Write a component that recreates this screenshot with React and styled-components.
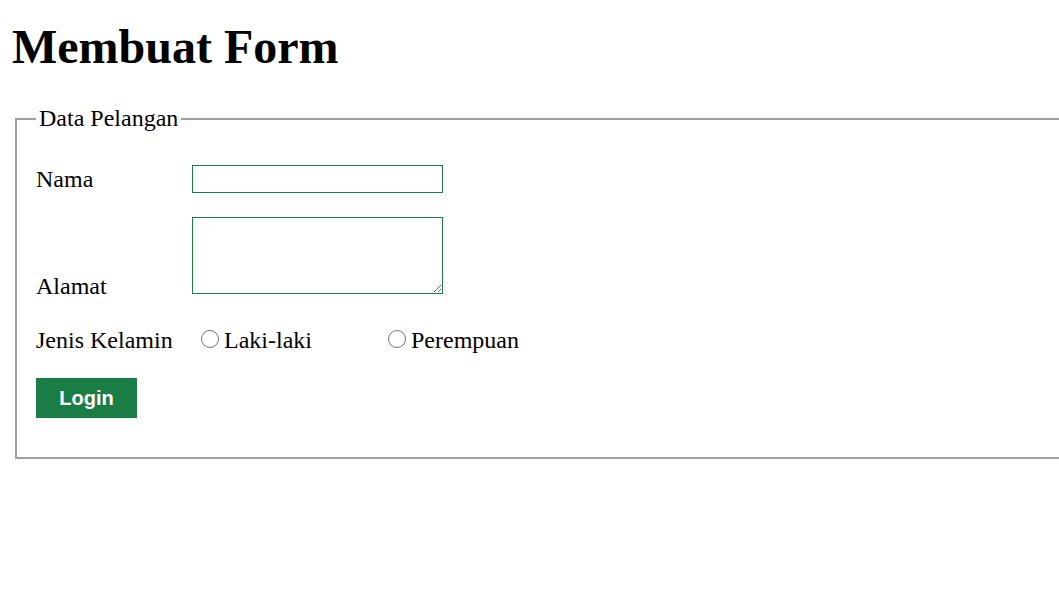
import React from 'react'
import styled, { createGlobalStyle } from 'styled-components'

const GlobalStyle = createGlobalStyle`
html, body {
  margin: 0;
  overflow: hidden;
  background: #fff;
}
body {
  font-family: "Liberation Serif", "Times New Roman", serif;
  font-size: 24px;
  color: #000;
}
`

const Page = styled.div`
padding-left: 12px;
width: 1200px;
`

const Title = styled.h1`
font-size: 48px;
font-weight: bold;
margin: 19px 0 31px 0;
`

const Box = styled.fieldset`
margin: 0 3px;
padding: 0 19px 39px 19px;
border: 2px solid #a0a0a0;
width: 1100px;
`

const Legend = styled.legend`
padding: 0 3px;
font-size: 24px;
`

const Row = styled.div`
display: flex;
align-items: ${p => p.$align || 'center'};
margin-top: ${p => p.$top}px;
`

const Label = styled.label`
width: 156px;
flex-shrink: 0;
margin-bottom: ${p => p.$drop ? '-6px' : '0'};
`

const TextInput = styled.input`
width: 251px;
height: 28px;
box-sizing: border-box;
border: 1px solid #1b7d46;
padding: 2px 3px;
font-size: 20px;
outline: none;
`

const TextArea = styled.textarea`
width: 251px;
height: 77px;
box-sizing: border-box;
border: 1px solid #1b7d46;
padding: 3px;
margin: 0;
display: block;
outline: none;
`

const Option = styled.label`
display: inline-flex;
align-items: center;
width: 187px;
`

const Radio = styled.input`
width: 18px;
height: 18px;
margin: 0 5px 4px 9px;
`

const Button = styled.button`
width: 101px;
height: 40px;
background: #1b7d46;
color: #fff;
border: none;
font-family: "Liberation Sans", Arial, sans-serif;
font-weight: bold;
font-size: 20px;
padding: 0;
`

export default function App() {
  return (
    <>
      <GlobalStyle />
      <Page>
        <Title>Membuat Form</Title>
        <Box>
          <Legend>Data Pelangan</Legend>
          <Row $top={33}>
            <Label>Nama</Label>
            <TextInput type="text" />
          </Row>
          <Row $top={24} $align="flex-end">
            <Label $drop>Alamat</Label>
            <TextArea />
          </Row>
          <Row $top={33}>
            <Label>Jenis Kelamin</Label>
            <Option><Radio type="radio" name="jk" />Laki-laki</Option>
            <Option><Radio type="radio" name="jk" />Perempuan</Option>
          </Row>
          <Row $top={24}>
            <Button>Login</Button>
          </Row>
        </Box>
      </Page>
    </>
  )
}
